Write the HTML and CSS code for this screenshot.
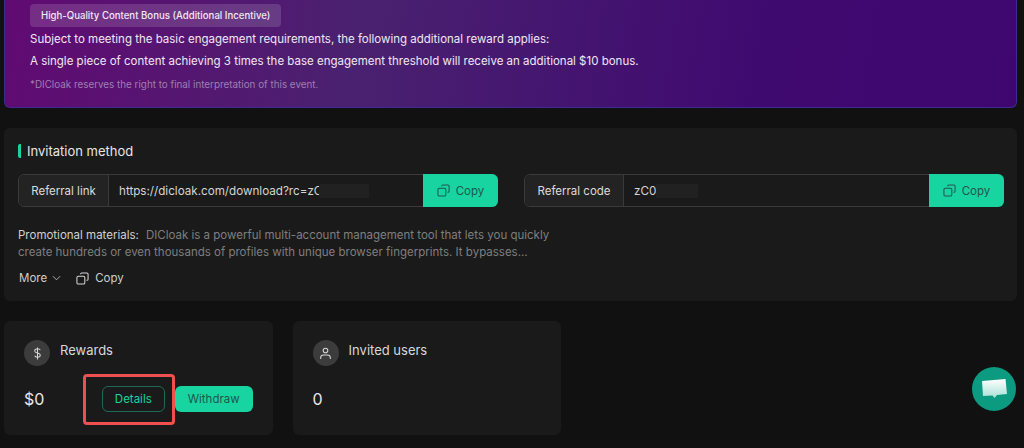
FILE: index.html
```html
<!DOCTYPE html>
<html lang="en">
<head>
<meta charset="utf-8">
<title>DICloak referral</title>
<link rel="stylesheet" href="styles.css">
</head>
<body>
<section class="promo">
  <div class="chip">High-Quality Content Bonus (Additional Incentive)</div>
  <p class="promo-line first">Subject to meeting the basic engagement requirements, the following additional reward applies:</p>
  <p class="promo-line second">A single piece of content achieving 3 times the base engagement threshold will receive an additional $10 bonus.</p>
  <p class="promo-note">*DICloak reserves the right to final interpretation of this event.</p>
</section>

<section class="card invite">
  <h2 class="title">Invitation method</h2>
  <div class="fields">
    <div class="field">
      <div class="field-label link-label">Referral link</div>
      <div class="field-value">https://dicloak.com/download?rc=zC<span class="redact redact-link"></span></div>
      <button class="copy-btn"><svg class="copy-icon" viewBox="0 0 14 14"><rect x="1" y="4.5" width="8.5" height="8.5" rx="1.5"/><path d="M5 2.2V2.5M5 2.2A1.2 1.2 0 0 1 6.2 1H11.8A1.2 1.2 0 0 1 13 2.2V7.8A1.2 1.2 0 0 1 11.8 9H11.3"/></svg>Copy</button>
    </div>
    <div class="field">
      <div class="field-label code-label">Referral code</div>
      <div class="field-value">zC0<span class="redact redact-code"></span></div>
      <button class="copy-btn"><svg class="copy-icon" viewBox="0 0 14 14"><rect x="1" y="4.5" width="8.5" height="8.5" rx="1.5"/><path d="M5 2.2V2.5M5 2.2A1.2 1.2 0 0 1 6.2 1H11.8A1.2 1.2 0 0 1 13 2.2V7.8A1.2 1.2 0 0 1 11.8 9H11.3"/></svg>Copy</button>
    </div>
  </div>
  <p class="materials"><span class="materials-key">Promotional materials:</span>DICloak is a powerful multi-account management tool that lets you quickly create hundreds or even thousands of profiles with unique browser fingerprints. It bypasses...</p>
  <div class="actions">
    <span class="more">More<svg class="chevron" viewBox="0 0 10 6"><path d="M1 1l4 4 4-4"/></svg></span>
    <span class="copy-text"><svg class="copy-icon light" viewBox="0 0 14 14"><rect x="1" y="4.5" width="8.5" height="8.5" rx="1.5"/><path d="M5 2.2V2.5M5 2.2A1.2 1.2 0 0 1 6.2 1H11.8A1.2 1.2 0 0 1 13 2.2V7.8A1.2 1.2 0 0 1 11.8 9H11.3"/></svg>Copy</span>
  </div>
</section>

<div class="stats">
  <section class="card stat">
    <div class="stat-head">
      <span class="avatar"><svg class="avatar-icon" viewBox="0 0 12 14"><path d="M9 3.4C8.6 2.4 7.5 2 6 2 4.3 2 3 2.7 3 4.2c0 3 6 1.500 6 4.500C9 10.300 7.700 11 6 11 4.400 11 3.300 10.500 3 9.400M6 .5v13"/></svg></span>
      <span class="stat-name">Rewards</span>
    </div>
    <div class="stat-row">
      <span class="stat-value">$0</span>
      <span class="details-wrap">
        <button class="details">Details</button>
        <span class="annotation"></span>
      </span>
      <button class="withdraw">Withdraw</button>
    </div>
  </section>
  <section class="card stat">
    <div class="stat-head">
      <span class="avatar"><svg class="avatar-icon" viewBox="0 0 14 14"><circle cx="7" cy="3.800" r="2.500"/><path d="M1.800 13v-1.500C1.800 9.500 3.300 8.500 5 8.500h4c1.700 0 3.200 1 3.200 3V13"/></svg></span>
      <span class="stat-name">Invited users</span>
    </div>
    <div class="stat-row">
      <span class="stat-value">0</span>
    </div>
  </section>
</div>

<div class="chat">
  <svg class="chat-icon" viewBox="0 0 26 22"><defs><linearGradient id="bubble" x1="0" y1="0" x2="0" y2="1"><stop offset="0" stop-color="#ffffff"/><stop offset="1" stop-color="#a8e0d5"/></linearGradient></defs><path d="M1 3 24.500 1 26 16 16 17 13.500 20 11.500 17.500 2 18Z" fill="url(#bubble)"/></svg>
</div>
</body>
</html>
```
FILE: styles.css
```css
* { box-sizing: border-box; }
html, body { height: 100%; }
body {
  margin: 0;
  padding: 0 7px 0 4px;
  background: #111111;
  color: #e4e4e4;
  font-family: Inter, "Liberation Sans", sans-serif;
  font-size: 11.5px;
  overflow: hidden;
  position: relative;
}
p, h2 { margin: 0; }

.promo {
  height: 108px;
  padding: 4px 24px 0 25px;
  border: 1px solid #3d2a92;
  border-top: 0;
  border-radius: 0 0 6px 6px;
  background: linear-gradient(100deg, #610a72 0%, #4a2170 35%, #3f0a70 75%, #3f0670 100%);
}
.chip {
  display: inline-block;
  height: 23px;
  line-height: 23px;
  padding: 0 11px;
  border-radius: 4px;
  background: rgba(255, 255, 255, 0.14);
  color: #f0e8f4;
  font-size: 9.65px;
  font-weight: 500;
}
.promo-line { color: #efe8f4; font-size: 11.5px; line-height: 16px; }
.promo-line.first { margin-top: 4px; }
.promo-line.second { margin-top: 6px; }
.promo-note { margin-top: 8px; color: #9d7fb0; font-size: 9.85px; line-height: 14px; }

.card { background: #1a1a1a; border-radius: 6px; }

.invite { height: 173px; margin-top: 20px; padding: 16px 13px 0 14px; }
.title {
  height: 14px;
  padding-left: 6px;
  border-left: 3px solid #17d4a1;
  border-radius: 2px;
  color: #e6e6e6;
  font-size: 13px;
  font-weight: 400;
  line-height: 14px;
}
.fields { display: flex; gap: 26px; margin-top: 16px; }
.field {
  display: flex;
  flex: 1;
  height: 33px;
  border: 1px solid #3a3a3a;
  border-radius: 6px;
  background: #1a1a1a;
}
.field-label {
  display: flex;
  align-items: center;
  justify-content: center;
  border-right: 1px solid #3a3a3a;
  border-radius: 6px 0 0 6px;
  background: #232323;
  color: #dcdcdc;
}
.link-label { width: 90px; }
.code-label { width: 99px; }
.field-value {
  display: flex;
  flex: 1;
  align-items: center;
  padding-left: 10px;
  color: #d4d4d4;
  font-size: 11.65px;
}
.redact { height: 14px; background: #212121; }
.redact-link { width: 50px; margin-left: -3px; }
.redact-code { width: 42px; }
.copy-btn {
  display: flex;
  align-items: center;
  justify-content: center;
  gap: 6px;
  width: 75px;
  margin: -1px;
  padding: 0;
  border: 0;
  border-radius: 0 6px 6px 0;
  background: #17d4a1;
  color: #20574a;
  font: inherit;
}
.copy-icon { width: 13px; height: 13px; fill: none; stroke: #20574a; stroke-width: 1.1; }
.copy-icon.light { stroke: #d8d8d8; }

.materials { width: 550px; margin-top: 20px; color: #7f7f7f; line-height: 17px; }
.materials-key { margin-right: 7px; color: #d0d0d0; }
.actions { display: flex; align-items: center; gap: 15px; margin-top: 10px; padding-left: 1px; color: #cfcfcf; }
.more, .copy-text { display: flex; align-items: center; }
.chevron { width: 9px; height: 6px; margin-left: 5px; fill: none; stroke: #bdbdbd; stroke-width: 1; }
.copy-text { gap: 6px; }

.stats { display: flex; gap: 20px; margin-top: 20px; }
.stat { width: 268.6px; height: 114px; padding: 19px 20px 0; }
.stat-head { display: flex; gap: 10px; }
.avatar {
  display: flex;
  align-items: center;
  justify-content: center;
  width: 26px;
  height: 26px;
  border-radius: 50%;
  background: #3c3c3c;
}
.avatar-icon { width: 13px; height: 13px; fill: none; stroke: #d6d6d6; stroke-width: 1.1; }
.stat-name { color: #d8d8d8; font-size: 13px; line-height: 20px; }
.stat-row { display: flex; align-items: center; height: 26px; margin-top: 20px; }
.stat-value { width: 78px; color: #e8e8e8; font-size: 16px; }
.details-wrap { position: relative; display: block; height: 26px; margin-right: 10px; }
.details {
  display: block;
  width: 63px;
  height: 26px;
  padding: 0;
  border: 1px solid #1c6a55;
  border-radius: 6px;
  background: transparent;
  color: #17d4a1;
  font: inherit;
}
.annotation {
  position: absolute;
  inset: -12px -10px -13px -19px;
  border: 3px solid #ef4f4f;
  border-radius: 4px;
}
.withdraw {
  width: 78px;
  height: 26px;
  padding: 0;
  border: 0;
  border-radius: 6px;
  background: #17d4a1;
  color: #20574a;
  font: inherit;
}

.chat {
  position: absolute;
  left: 972px;
  top: 367px;
  display: flex;
  align-items: center;
  justify-content: center;
  width: 44px;
  height: 44px;
  border-radius: 50%;
  background: #0c9a80;
}
.chat-icon { width: 26px; height: 22px; }
```
